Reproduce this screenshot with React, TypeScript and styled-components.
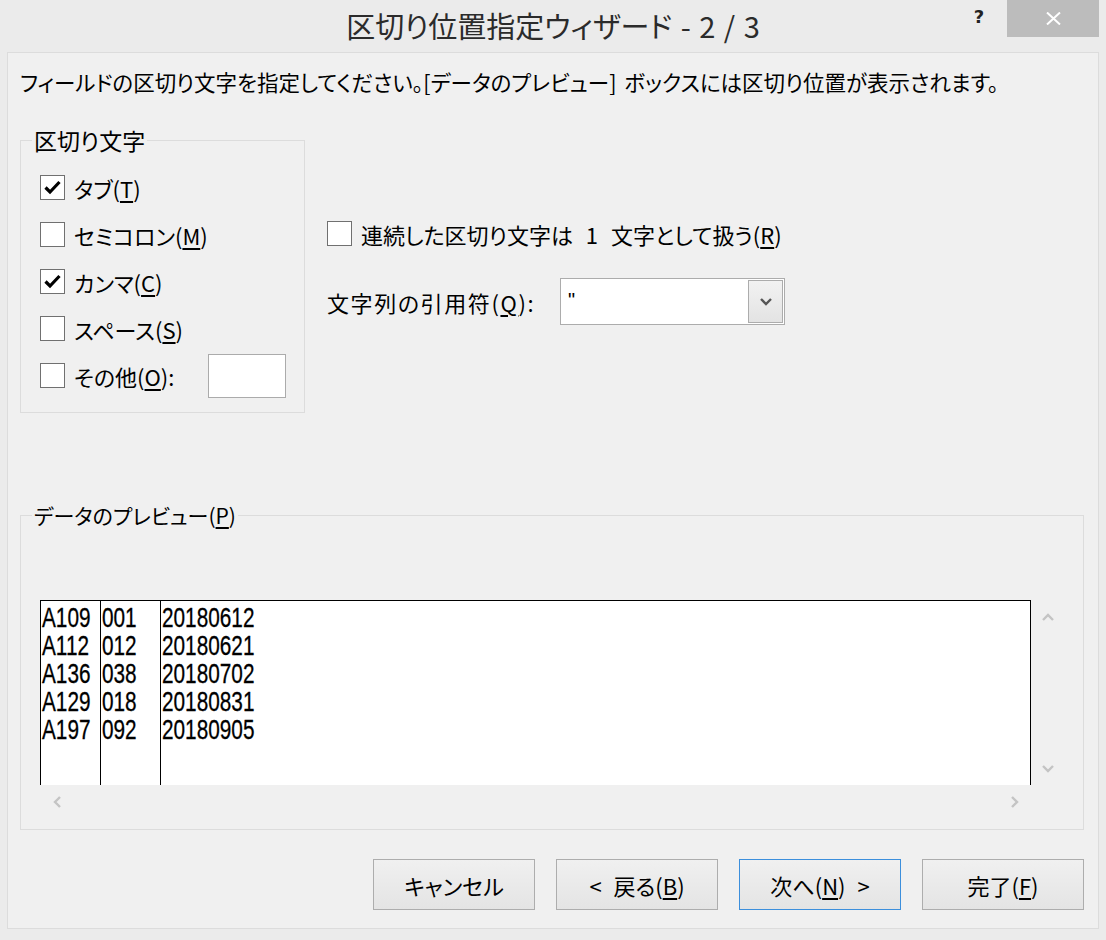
import React from "react";
import styled, { createGlobalStyle } from "styled-components";

const GlobalStyle = createGlobalStyle`
  html, body {
    margin: 0;
    padding: 0;
    background: #ebebeb;
  }
  body {
    font-family: "Noto Sans CJK JP", "Noto Sans", sans-serif;
    font-feature-settings: "palt" 1;
    color: #000;
  }
`;

const Window = styled.div`
  width: 1106px;
  height: 940px;
  display: flex;
  flex-direction: column;
  background: #ebebeb;
  overflow: hidden;
`;

const TitleBar = styled.div`
  height: 52px;
  display: grid;
  grid-template-columns: 1fr auto 1fr;
  flex-shrink: 0;
`;

const Title = styled.div`
  grid-column: 2;
  font-size: 29px;
  line-height: 50px;
  word-spacing: 2px;
  color: #2b2b2b;
  white-space: nowrap;
`;

const TitleControls = styled.div`
  grid-column: 3;
  display: flex;
  justify-content: flex-end;
  align-items: flex-start;
  padding-right: 7px;
`;

const HelpButton = styled.div`
  width: 24px;
  height: 34px;
  margin-right: 16px;
  font-family: "DejaVu Sans", sans-serif;
  font-weight: 700;
  font-size: 18px;
  line-height: 34px;
  text-align: center;
  color: #222;
`;

const CloseButton = styled.div`
  width: 92px;
  height: 37px;
  background: #bcbcbc;
  display: flex;
  align-items: center;
  justify-content: center;
`;

const Client = styled.div`
  margin: 0 7px;
  height: 877px;
  box-sizing: border-box;
  border: 1px solid #dcdcdc;
  background: #f0f0f0;
  padding: 14px 14px 0 12px;
  display: flex;
  flex-direction: column;
`;

const Instruction = styled.div`
  font-size: 21.5px;
  line-height: 30px;
  word-spacing: 3px;
  white-space: nowrap;
`;

const UpperRow = styled.div`
  margin-top: 31px;
  display: flex;
  align-items: flex-start;
  gap: 22px;
`;

const GroupBox = styled.fieldset<{ $width?: number }>`
  margin: 0;
  padding: 0;
  border: 1px solid #dcdcdc;
  width: ${(p) => (p.$width ? `${p.$width}px` : "auto")};
  box-sizing: border-box;
  min-width: 0;
`;

const Legend = styled.legend<{ $size?: number }>`
  margin-left: 11px;
  padding: 0 2px;
  font-size: ${(p) => p.$size ?? 23}px;
  line-height: 24px;
`;

const DelimiterList = styled.div`
  padding: 12px 0 13px 19px;
  display: flex;
  flex-direction: column;
`;

const CheckRow = styled.label<{ $wordSpacing?: number }>`
  height: 47px;
  display: flex;
  align-items: center;
  gap: 9px;
  font-size: 22px;
  word-spacing: ${(p) => p.$wordSpacing ?? 0}px;
  white-space: nowrap;
`;

const Box = styled.span`
  width: 25px;
  height: 25px;
  box-sizing: border-box;
  border: 1px solid #707070;
  background: #fff;
  display: grid;
  place-items: center;
  flex-shrink: 0;
`;

const Key = styled.u`
  text-underline-offset: 3px;
  text-decoration-thickness: 1.5px;
`;

const OtherInput = styled.span`
  width: 78px;
  height: 44px;
  box-sizing: border-box;
  border: 1px solid #ababab;
  background: #fff;
  margin-left: 25px;
`;

const Options = styled.div`
  padding-top: 82px;
  display: flex;
  flex-direction: column;
  gap: 21px;
`;

const QuoteRow = styled.div`
  display: flex;
  align-items: center;
  font-size: 22px;
`;

const QuoteLabel = styled.span`
  width: 233px;
  letter-spacing: 1.6px;
  white-space: nowrap;
`;

const Select = styled.div`
  width: 225px;
  height: 47px;
  box-sizing: border-box;
  border: 1px solid #acacac;
  background: #fff;
  padding: 1px;
  display: flex;
  align-items: stretch;
`;

const SelectValue = styled.span`
  flex: 1;
  padding-left: 6px;
  font-family: "Liberation Sans", sans-serif;
  font-size: 20px;
  line-height: 40px;
`;

const SelectButton = styled.span`
  width: 35px;
  box-sizing: border-box;
  border: 1px solid #acacac;
  background: linear-gradient(#f2f2f2, #e3e3e3);
  display: grid;
  place-items: center;
`;

const PreviewGroup = styled(GroupBox)`
  margin-top: 90px;
`;

const PreviewBody = styled.div`
  padding: 73px 17px 10px 19px;
  display: grid;
  grid-template-columns: 991px 34px;
  grid-template-rows: 185px 34px;
`;

const DataBox = styled.div`
  background: #fff;
  border: 1px solid #000;
  border-bottom: none;
  display: flex;
  overflow: hidden;
`;

const DataColumn = styled.div<{ $width?: number }>`
  width: ${(p) => (p.$width ? `${p.$width}px` : "auto")};
  flex: ${(p) => (p.$width ? "0 0 auto" : "1")};
  box-sizing: border-box;
  border-right: ${(p) => (p.$width ? "1px solid #000" : "none")};
  padding: 3px 0 0 1px;
  font-family: "Liberation Sans", sans-serif;
  font-size: 27px;
  line-height: 28px;
`;

/* the preview uses a narrow fixed-pitch face; squeeze Liberation Sans to match */
const DataCell = styled.div`
  width: max-content;
  transform: scaleX(0.77);
  transform-origin: left center;
  -webkit-text-stroke: 0.3px #000;
`;

const VScroll = styled.div`
  display: flex;
  flex-direction: column;
  justify-content: space-between;
`;

const HScroll = styled.div`
  display: flex;
  justify-content: space-between;
`;

const ArrowCell = styled.span`
  width: 34px;
  height: 34px;
  display: grid;
  place-items: center;
`;

const ButtonRow = styled.div`
  margin-top: 29px;
  display: flex;
  justify-content: flex-end;
  gap: 21px;
`;

const Button = styled.div<{ $default?: boolean }>`
  width: 162px;
  height: 51px;
  box-sizing: border-box;
  border: 1px solid ${(p) => (p.$default ? "#3c8fdc" : "#adadad")};
  background: linear-gradient(#f0f0f0, #e4e4e4);
  display: flex;
  align-items: center;
  justify-content: center;
  font-size: 22px;
  word-spacing: 7px;
  white-space: nowrap;
`;

const Check = () => (
  <svg width="17" height="15" viewBox="0 0 17 15">
    <path d="M1.5 7.5 L6 12 L15.5 2" fill="none" stroke="#000" strokeWidth="3.2" />
  </svg>
);

const Chevron = ({ dir, color = "#c4c4c4" }: { dir: "up" | "down" | "left" | "right"; color?: string }) => {
  const d = {
    up: "M1 7 L6 2 L11 7",
    down: "M1 2 L6 7 L11 2",
    left: "M7 1 L2 6 L7 11",
    right: "M2 1 L7 6 L2 11",
  }[dir];
  const vertical = dir === "up" || dir === "down";
  return (
    <svg width={vertical ? 12 : 9} height={vertical ? 9 : 12} viewBox={vertical ? "0 0 12 9" : "0 0 9 12"}>
      <path d={d} fill="none" stroke={color} strokeWidth="2.4" />
    </svg>
  );
};

const CheckBox = ({
  checked,
  wordSpacing,
  children,
}: {
  checked?: boolean;
  wordSpacing?: number;
  children: React.ReactNode;
}) => (
  <CheckRow $wordSpacing={wordSpacing}>
    <Box>{checked && <Check />}</Box>
    <span>{children}</span>
  </CheckRow>
);

const rows = [
  ["A109", "001", "20180612"],
  ["A112", "012", "20180621"],
  ["A136", "038", "20180702"],
  ["A129", "018", "20180831"],
  ["A197", "092", "20180905"],
];

export default function App() {
  return (
    <>
      <GlobalStyle />
      <Window>
        <TitleBar>
          <Title>区切り位置指定ウィザード - 2 / 3</Title>
          <TitleControls>
            <HelpButton>?</HelpButton>
            <CloseButton>
              <svg width="15" height="13" viewBox="0 0 15 13">
                <path d="M1 0.5 L14 12.5 M14 0.5 L1 12.5" stroke="#fff" strokeWidth="2" />
              </svg>
            </CloseButton>
          </TitleControls>
        </TitleBar>

        <Client>
          <Instruction>
            フィールドの区切り文字を指定してください。[データのプレビュー] ボックスには区切り位置が表示されます。
          </Instruction>

          <UpperRow>
            <GroupBox $width={285}>
              <Legend>区切り文字</Legend>
              <DelimiterList>
                <CheckBox checked>
                  タブ(<Key>T</Key>)
                </CheckBox>
                <CheckBox>
                  セミコロン(<Key>M</Key>)
                </CheckBox>
                <CheckBox checked>
                  カンマ(<Key>C</Key>)
                </CheckBox>
                <CheckBox>
                  スペース(<Key>S</Key>)
                </CheckBox>
                <CheckRow>
                  <Box />
                  <span>
                    その他(<Key>O</Key>):
                  </span>
                  <OtherInput />
                </CheckRow>
              </DelimiterList>
            </GroupBox>

            <Options>
              <CheckBox wordSpacing={8}>
                連続した区切り文字は 1 文字として扱う(<Key>R</Key>)
              </CheckBox>
              <QuoteRow>
                <QuoteLabel>
                  文字列の引用符(<Key>Q</Key>):
                </QuoteLabel>
                <Select>
                  <SelectValue>"</SelectValue>
                  <SelectButton>
                    <Chevron dir="down" color="#555" />
                  </SelectButton>
                </Select>
              </QuoteRow>
            </Options>
          </UpperRow>

          <PreviewGroup>
            <Legend $size={21}>
              データのプレビュー(<Key>P</Key>)
            </Legend>
            <PreviewBody>
              <DataBox>
                {[0, 1, 2].map((c) => (
                  <DataColumn key={c} $width={c < 2 ? 60 : undefined}>
                    {rows.map((r) => (
                      <DataCell key={r[0]}>{r[c]}</DataCell>
                    ))}
                  </DataColumn>
                ))}
              </DataBox>
              <VScroll>
                <ArrowCell>
                  <Chevron dir="up" />
                </ArrowCell>
                <ArrowCell>
                  <Chevron dir="down" />
                </ArrowCell>
              </VScroll>
              <HScroll>
                <ArrowCell>
                  <Chevron dir="left" />
                </ArrowCell>
                <ArrowCell>
                  <Chevron dir="right" />
                </ArrowCell>
              </HScroll>
            </PreviewBody>
          </PreviewGroup>

          <ButtonRow>
            <Button>キャンセル</Button>
            <Button>
              &lt; 戻る(<Key>B</Key>)
            </Button>
            <Button $default>
              次へ(<Key>N</Key>) &gt;
            </Button>
            <Button>
              完了(<Key>F</Key>)
            </Button>
          </ButtonRow>
        </Client>
      </Window>
    </>
  );
}
